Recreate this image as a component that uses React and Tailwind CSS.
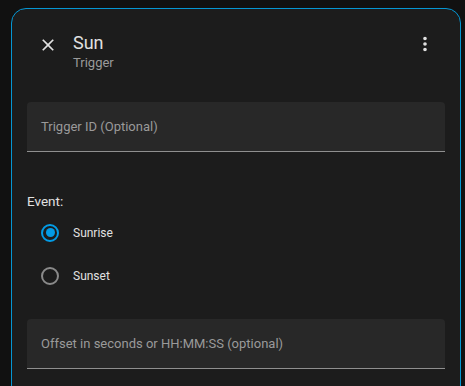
import React, { useState } from 'react';

const CloseIcon = () => (
    <svg viewBox="0 0 24 24" className="h-5 w-5" fill="currentColor">
        <path d="M19,6.41L17.59,5L12,10.59L6.41,5L5,6.41L10.59,12L5,17.59L6.41,19L12,13.41L17.59,19L19,17.59L13.41,12L19,6.41Z" />
    </svg>
);

const DotsIcon = () => (
    <svg viewBox="0 0 24 24" className="h-[22px] w-[22px]" fill="currentColor">
        <path d="M12,16A2,2 0 0,1 14,18A2,2 0 0,1 12,20A2,2 0 0,1 10,18A2,2 0 0,1 12,16M12,10A2,2 0 0,1 14,12A2,2 0 0,1 12,14A2,2 0 0,1 10,12A2,2 0 0,1 12,10M12,4A2,2 0 0,1 14,6A2,2 0 0,1 12,8A2,2 0 0,1 10,6A2,2 0 0,1 12,4Z" />
    </svg>
);

const TextField = ({ label }) => (
    <div className="flex h-[50px] items-center rounded-t-[4px] border-b border-[#8f8f8f] bg-[#282828] px-[14px]">
        <span className="text-[13px] text-[#9a9a9a]">{label}</span>
    </div>
);

const Radio = ({ checked, label, onClick }) => (
    <button type="button" onClick={onClick} className="flex h-[43px] items-center text-left">
        <span className="flex w-[46px] justify-center">
            <span
                className={
                    checked
                        ? 'flex h-[18px] w-[18px] items-center justify-center rounded-full border-[2px] border-[#039be5]'
                        : 'flex h-[18px] w-[18px] items-center justify-center rounded-full border-[2px] border-[#8a8a8a]'
                }
            >
                {checked && <span className="h-[9px] w-[9px] rounded-full bg-[#039be5]" />}
            </span>
        </span>
        <span className="text-[12px] text-[#e1e1e1]">{label}</span>
    </button>
);

export default function App() {
    const [event, setEvent] = useState('sunrise');

    return (
        <div
            className="h-[386px] w-[465px] overflow-hidden bg-[#111111] pl-[11px] pt-[8px]"
            style={{ fontFamily: 'Roboto, "Noto Sans", sans-serif' }}
        >
            <div className="h-[420px] w-[450px] rounded-t-[15px] border border-[#0596d2] bg-[#1c1c1c]">
                <div className="flex h-[61px] items-start pl-[26px] pr-[24px] pt-[23px]">
                    <button type="button" className="mt-[3px] text-[#e1e1e1]">
                        <CloseIcon />
                    </button>
                    <div className="ml-[15px] flex flex-col">
                        <span className="text-[18px] leading-[22px] text-[#e1e1e1]">Sun</span>
                        <span className="text-[13px] leading-[18px] text-[#9a9a9a]">Trigger</span>
                    </div>
                    <button type="button" className="ml-auto mt-[1px] text-[#e1e1e1]">
                        <DotsIcon />
                    </button>
                </div>
                <div className="flex flex-col px-[15px] pt-[32px]">
                    <TextField label="Trigger ID (Optional)" />
                    <div className="mt-[41px] text-[13.5px] leading-[16px] text-[#e1e1e1]">Event:</div>
                    <div className="mt-[2px] flex flex-col">
                        <Radio checked={event === 'sunrise'} label="Sunrise" onClick={() => setEvent('sunrise')} />
                        <Radio checked={event === 'sunset'} label="Sunset" onClick={() => setEvent('sunset')} />
                    </div>
                    <div className="mt-[22px]">
                        <TextField label="Offset in seconds or HH:MM:SS (optional)" />
                    </div>
                </div>
            </div>
        </div>
    );
}
